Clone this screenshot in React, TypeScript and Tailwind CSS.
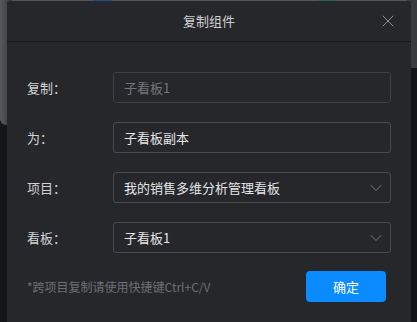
import { ChevronDown, X } from "lucide-react";

const font = { fontFamily: '"Noto Sans CJK SC", "Noto Sans", sans-serif' };

function Row({ label, children }: { label: string; children: React.ReactNode }) {
  return (
    <div className="flex items-center h-[31px]">
      <div className="w-[86px] text-[13px] text-[#d2d3d5]">{label}</div>
      <div className="flex-1">{children}</div>
    </div>
  );
}

function Select({ value }: { value: string }) {
  return (
    <div className="flex items-center justify-between h-[31px] border border-[#4a4b50] rounded-[3px] pl-[10px] pr-[4px] text-[13px] text-[#e4e5e7]">
      <span>{value}</span>
      <ChevronDown size={20} strokeWidth={1} className="text-[#8a8b8f]" />
    </div>
  );
}

export default function App() {
  return (
    <div
      className="relative w-[417px] h-[322px] overflow-hidden bg-[#141517]"
      style={font}
    >
      {/* page behind the dialog */}
      <div className="absolute left-0 top-0 w-[417px] h-[2px] bg-[#55565a]" />
      <div className="absolute left-[93px] top-0 w-[19px] h-[2px] bg-[#1f4f8f]" />
      <div className="absolute left-[318px] top-0 w-[18px] h-[2px] bg-[#1d6b45]" />
      <div className="absolute left-0 top-0 w-[12px] h-[125px] rounded-bl-[6px] bg-gradient-to-r from-[#58595c] to-[#37383b]" />
      <div className="absolute right-0 top-0 w-[10px] h-[68px] bg-[#3a3b3e]" />

      {/* dialog */}
      <div className="absolute left-[7px] top-[1px] w-[404px] h-[330px] bg-[#26272b] rounded-t-[2px] flex flex-col">
        <div className="relative h-[41px] border-b border-[#18191b] flex items-center justify-center">
          <span className="text-[13px] text-[#cfd0d3]">复制组件</span>
          <X
            size={20}
            strokeWidth={1}
            className="absolute right-[13px] top-[10px] text-[#a9aaad]"
          />
        </div>

        <div className="flex flex-col gap-[19px] pt-[30px] pl-[20px] pr-[20px]">
          <Row label="复制：">
            <div className="flex items-center h-[31px] border border-[#3f4045] rounded-[3px] px-[10px] text-[13px] text-[#75767a]">
              子看板1
            </div>
          </Row>
          <Row label="为：">
            <div className="flex items-center h-[31px] border border-[#4a4b50] rounded-[3px] px-[10px] text-[13px] text-[#e4e5e7]">
              子看板副本
            </div>
          </Row>
          <Row label="项目：">
            <Select value="我的销售多维分析管理看板" />
          </Row>
          <Row label="看板：">
            <Select value="子看板1" />
          </Row>
        </div>

        <div className="flex items-center justify-between pl-[20px] pr-[25px] mt-[18px]">
          <span className="text-[12px] text-[#6e6f73]">*跨项目复制请使用快捷键Ctrl+C/V</span>
          <button className="w-[80px] h-[31px] rounded-[4px] bg-[#0a8bff] text-[13px] text-white">
            确定
          </button>
        </div>
      </div>
    </div>
  );
}
